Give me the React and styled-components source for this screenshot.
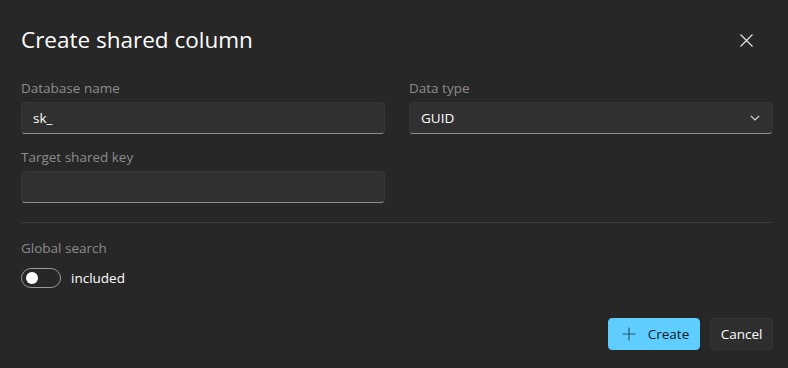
import React from "react";
import styled, { createGlobalStyle } from "styled-components";

const Global = createGlobalStyle`
  html, body { margin: 0; padding: 0; background: #272727; }
  body { font-family: "Segoe UI", "Open Sans", "Noto Sans", sans-serif; color: #fff; }
  * { box-sizing: border-box; }
`;

const Dialog = styled.div`
  width: 788px;
  height: 368px;
  background: #272727;
  padding: 26px 15px 18px 21px;
  display: flex;
  flex-direction: column;
`;

const Header = styled.div`
  display: flex;
  align-items: center;
  justify-content: space-between;
  height: 28px;
`;

const Title = styled.h1`
  margin: 0;
  font-size: 22.5px;
  font-weight: 400;
  line-height: 28px;
  color: #ffffff;
`;

const CloseButton = styled.button`
  width: 32px;
  height: 32px;
  margin-right: 11px;
  border: none;
  background: transparent;
  display: flex;
  align-items: center;
  justify-content: center;
  padding: 0;
  color: #e6e6e6;
`;

const Grid = styled.div`
  display: grid;
  grid-template-columns: 364px 364px;
  column-gap: 24px;
  row-gap: 13px;
  margin-top: 24px;
`;

const Field = styled.div`
  display: flex;
  flex-direction: column;
  gap: 4px;
`;

const Label = styled.label`
  font-size: 13.5px;
  line-height: 20px;
  color: #8c8c8c;
`;

const InputBox = styled.div`
  height: 32px;
  background: #303030;
  border: 1px solid #363636;
  border-bottom: 1px solid #8d8d8d;
  border-radius: 4px;
  display: flex;
  align-items: center;
  justify-content: space-between;
  padding: 0 12px 0 11px;
  font-size: 13.5px;
  color: #fff;
`;

const Divider = styled.hr`
  border: none;
  border-top: 1px solid #3c3c3c;
  margin: 19px 0 15px 0;
  width: 100%;
`;

const SwitchRow = styled.div`
  display: flex;
  align-items: center;
  gap: 10px;
  margin-top: 10px;
`;

const Track = styled.div`
  width: 40px;
  height: 20px;
  border-radius: 10px;
  border: 1px solid #9a9a9a;
  display: flex;
  align-items: center;
  padding-left: 4px;
`;

const Knob = styled.div`
  width: 12px;
  height: 12px;
  border-radius: 50%;
  background: #ffffff;
`;

const SwitchText = styled.span`
  font-size: 13.5px;
  color: #fff;
`;

const Footer = styled.div`
  margin-top: auto;
  display: flex;
  justify-content: flex-end;
  gap: 10px;
`;

const Button = styled.button`
  height: 32px;
  border-radius: 4px;
  font-family: inherit;
  font-size: 13.5px;
  display: flex;
  align-items: center;
  gap: 11px;
  padding: ${(p) => (p.$primary ? "0 10px 0 12px" : "0 9.5px")};
  background: ${(p) => (p.$primary ? "#60cdff" : "#2e2e2e")};
  color: ${(p) => (p.$primary ? "#0b1d26" : "#ffffff")};
  border: 1px solid ${(p) => (p.$primary ? "#60cdff" : "#363636")};
`;

const Plus = () => (
  <svg width="16" height="16" viewBox="0 0 16 16" fill="none">
    <path d="M8 1.5v13M1.5 8h13" stroke="#2a5569" strokeWidth="1.2" />
  </svg>
);

const Close = () => (
  <svg width="13" height="13" viewBox="0 0 13 13" fill="none">
    <path d="M0.5 0.5l12 12M12.5 0.5l-12 12" stroke="#e8e8e8" strokeWidth="1.1" />
  </svg>
);

const Chevron = () => (
  <svg width="10" height="6" viewBox="0 0 10 6" fill="none">
    <path d="M0.8 0.8L5 5l4.2-4.2" stroke="#dcdcdc" strokeWidth="1.2" />
  </svg>
);

export default function App() {
  return (
    <>
      <Global />
      <Dialog>
        <Header>
          <Title>Create shared column</Title>
          <CloseButton aria-label="Close">
            <Close />
          </CloseButton>
        </Header>
        <Grid>
          <Field>
            <Label>Database name</Label>
            <InputBox>sk_</InputBox>
          </Field>
          <Field>
            <Label>Data type</Label>
            <InputBox>
              GUID
              <Chevron />
            </InputBox>
          </Field>
          <Field>
            <Label>Target shared key</Label>
            <InputBox />
          </Field>
        </Grid>
        <Divider />
        <Label>Global search</Label>
        <SwitchRow>
          <Track>
            <Knob />
          </Track>
          <SwitchText>included</SwitchText>
        </SwitchRow>
        <Footer>
          <Button $primary>
            <Plus />
            Create
          </Button>
          <Button>Cancel</Button>
        </Footer>
      </Dialog>
    </>
  );
}
